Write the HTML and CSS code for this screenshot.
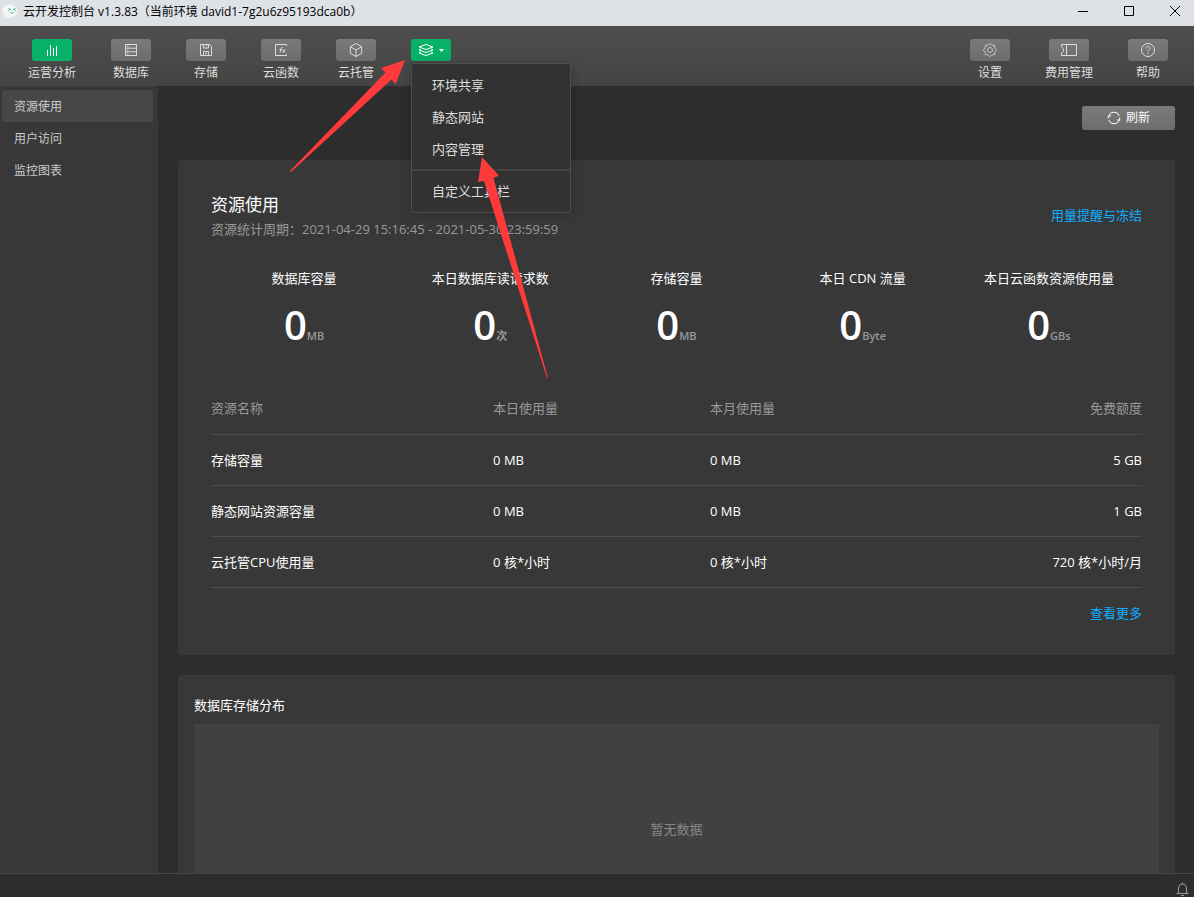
FILE: index.html
```html
<!DOCTYPE html>
<html lang="zh-CN">
<head>
<meta charset="utf-8">
<title>云开发控制台</title>
<link rel="stylesheet" href="styles.css">
</head>
<body>
<div class="app">
  <header class="titlebar">
    <svg class="app-logo" width="16" height="16" viewBox="0 0 16 16"><path d="M.500 7C.500 3 4 .500 8 .500S15.500 3 15.500 7 12 13.500 8 13.500L4.500 13 2.500 14V12Q.500 10 .500 7z" fill="#f4f6f7" stroke="#e8eaed"/><path d="M6.500 4.500 8.500 5.500 6.500 6.500M13.500 4.500 11.500 5.500 13.500 6.500M8.500 8.500q1.500 1.500 3 0" fill="none" stroke="#23b97c"/></svg>
    <h1 class="app-name">云开发控制台 v1.3.83（当前环境 david1-7g2u6z95193dca0b）</h1>
    <div class="window-controls">
      <button class="window-button" aria-label="最小化"><svg width="12" height="12"><path d="M1 5.500h10" stroke="#000"/></svg></button>
      <button class="window-button" aria-label="最大化"><svg width="12" height="12"><path d="M1.500.500h9v9h-9z" fill="none" stroke="#000"/></svg></button>
      <button class="window-button" aria-label="关闭"><svg width="12" height="12"><path d="M1 0l10 10M11 0 1 10" stroke="#000"/></svg></button>
    </div>
  </header>

  <div class="toolbar">
    <nav class="tools">
      <button class="tool"><span class="tool-icon active"><svg width="16" height="16" viewBox="0 0 16 16"><path d="M3.500 8v6M6.500 3v11M9.500 6v8M12.500 4v10" /></svg></span>运营分析</button>
      <button class="tool"><span class="tool-icon"><svg width="16" height="16" viewBox="0 0 16 16"><path d="M2.500 2.500h11v11h-11zM2.500 6.200h11M2.500 9.800h11M4 4.400h1.500M4 8h1.500M4 11.700h1.500"/></svg></span>数据库</button>
      <button class="tool"><span class="tool-icon"><svg width="16" height="16" viewBox="0 0 16 16"><path d="M2.500 2.500h9l2 2v9h-11zM5.500 2.500v3.500h5V2.500M8.500 3v1.500M5.500 13.500v-4h5v4M7 11.500h2"/></svg></span>存储</button>
      <button class="tool"><span class="tool-icon"><svg width="16" height="16" viewBox="0 0 16 16"><path d="M13.500 4V2.500h-11v11h11V12"/><path d="M9.700 5.500c-1.200-.5-1.500.3-1.700 1.200l-.8 3.800M6.500 7.500h2.700M9.500 7.500c1.200 0 1 3 2.500 3M12.500 7.500c-1.200 0-2 3-3.300 3"/></svg></span>云函数</button>
      <button class="tool"><span class="tool-icon"><svg width="16" height="16" viewBox="0 0 16 16"><path d="M8 1.500 13.700 4.700v6.600L8 14.500 2.300 11.300V4.700zM2.300 4.700 8 8l5.700-3.300M8 8v6.500"/></svg></span>云托管</button>
      <div class="more">
        <button class="tool-icon active" aria-label="更多" aria-expanded="true"><svg width="28" height="16" viewBox="0 0 28 16"><path d="M2 5 9 2.500l7 2.500-7 2.500zM4 7 2 8l7 2.500L16 8l-2-1M4 10l-2 1 7 2.500 7-2.500-2-1"/><path class="caret" d="M22 7h5l-2.500 3z"/></svg></button>
        <div class="menu">
          <button class="menu-item">环境共享</button>
          <button class="menu-item">静态网站</button>
          <button class="menu-item">内容管理</button>
          <hr class="menu-divider">
          <button class="menu-item">自定义工具栏</button>
        </div>
      </div>
    </nav>
    <nav class="tools">
      <button class="tool"><span class="tool-icon"><svg class="thin" width="16" height="16" viewBox="0 0 16 16"><path d="M8 1.300 9.900 3.200 12.700 3.300 12.800 6.100 14.700 8 12.800 9.900 12.700 12.700 9.900 12.800 8 14.700 6.100 12.800 3.300 12.700 3.200 9.900 1.300 8 3.200 6.100 3.300 3.300 6.100 3.200z"/><circle cx="8" cy="8" r="2.500"/></svg></span>设置</button>
      <button class="tool"><span class="tool-icon"><svg width="18" height="16" viewBox="0 0 18 16"><path d="M1.500 2.500h15v11h-15v-2.500c2.600-.6 2.600-5.400 0-6zM6.500 2.500v11"/></svg></span>费用管理</button>
      <button class="tool"><span class="tool-icon"><svg width="16" height="16" viewBox="0 0 16 16"><circle cx="8" cy="8" r="6.500"/><path d="M6 6.500c0-2.700 4-2.600 4-.2C10 7.800 8 7.700 8 9.500M8 10.800v1.200"/></svg></span>帮助</button>
    </nav>
  </div>

  <div class="workspace">
    <nav class="sidebar">
      <a class="side-link current" href="#usage">资源使用</a>
      <a class="side-link" href="#visits">用户访问</a>
      <a class="side-link" href="#charts">监控图表</a>
    </nav>
    <main class="content">
      <button class="refresh"><svg width="14" height="14" viewBox="0 0 14 14"><path d="M1.600 5A5.700 5.700 0 0 1 12.400 5M12.400 9A5.700 5.700 0 0 1 1.600 9M1.300 7.500V5H4M12.700 6.500V9H10"/></svg>刷新</button>

      <section class="card usage" id="usage">
        <div class="usage-head">
          <div>
            <h2 class="usage-title">资源使用</h2>
            <p class="period">资源统计周期：2021-04-29 15:16:45 - 2021-05-30 23:59:59</p>
          </div>
          <a class="link freeze" href="#freeze">用量提醒与冻结</a>
        </div>
        <div class="stats">
          <div class="stat"><div>数据库容量</div><div class="figure"><b class="value">0</b><span class="unit">MB</span></div></div>
          <div class="stat"><div>本日数据库读请求数</div><div class="figure"><b class="value">0</b><span class="unit">次</span></div></div>
          <div class="stat"><div>存储容量</div><div class="figure"><b class="value">0</b><span class="unit">MB</span></div></div>
          <div class="stat"><div>本日 CDN 流量</div><div class="figure"><b class="value">0</b><span class="unit">Byte</span></div></div>
          <div class="stat"><div>本日云函数资源使用量</div><div class="figure"><b class="value">0</b><span class="unit">GBs</span></div></div>
        </div>
        <table class="quota">
          <thead><tr><th class="col-name">资源名称</th><th class="col-day">本日使用量</th><th>本月使用量</th><th class="end">免费额度</th></tr></thead>
          <tbody>
            <tr><td>存储容量</td><td>0 MB</td><td>0 MB</td><td class="end">5 GB</td></tr>
            <tr><td>静态网站资源容量</td><td>0 MB</td><td>0 MB</td><td class="end">1 GB</td></tr>
            <tr><td>云托管CPU使用量</td><td>0 核*小时</td><td>0 核*小时</td><td class="end">720 核*小时/月</td></tr>
          </tbody>
        </table>
        <div class="more-row"><a class="link" href="#all">查看更多</a></div>
      </section>

      <section class="card storage">
        <h2 class="storage-title">数据库存储分布</h2>
        <div class="empty">暂无数据</div>
      </section>
    </main>
  </div>

  <footer class="statusbar">
    <button class="bell" aria-label="通知"><svg width="13" height="14" viewBox="0 0 13 14"><path d="M2.500 11.500V6a4 4 0 0 1 8 0v5.500M.5 11.500h12M6.500.500V2M5 13.500h3" /></svg></button>
  </footer>

  <svg class="arrows" width="560" height="390" viewBox="0 0 560 390" aria-hidden="true">
    <path d="M405 60 395.700 84 391.500 79.500 291 172 290 171 385.500 72.500 381 68z"/>
    <path d="M482 157 499 175.700 493.500 178 548 378 547 378 484 181 478 182z"/>
  </svg>
</div>
</body>
</html>
```
FILE: styles.css
```css
* { box-sizing: border-box; }

body {
  margin: 0;
  font: 13px/20px "Open Sans", "Noto Sans CJK SC", sans-serif;
  color: #fff;
  background: #2d2d2d;
}

button {
  margin: 0;
  padding: 0;
  border: 0;
  background: none;
  color: inherit;
  font: inherit;
}

h1, h2, p { margin: 0; font-weight: 400; }

svg { display: block; }

.app {
  position: relative;
  display: flex;
  flex-direction: column;
  height: 100vh;
  overflow: hidden;
}

.titlebar {
  display: flex;
  flex: none;
  gap: 5px;
  height: 26px;
  padding: 2px 0 4px 2px;
  align-items: center;
  background: #dee1e6;
  color: #000;
}

.app-name { font-size: 12px; line-height: 20px; }

.window-controls { display: flex; gap: 8px; margin-left: auto; }

.window-button {
  display: flex;
  justify-content: center;
  align-items: center;
  width: 38px;
  height: 20px;
}

.toolbar {
  display: flex;
  flex: none;
  justify-content: space-between;
  height: 60px;
  padding: 13px 26px 0 28px;
  background: linear-gradient(#4e4e4e, #444);
}

.tools { display: flex; gap: 35px; }

.tool {
  display: flex;
  flex-direction: column;
  align-items: center;
  align-self: flex-start;
  gap: 2px;
  min-width: 40px;
  color: #ddd;
  font-size: 12px;
  line-height: 20px;
}

.tool-icon {
  display: flex;
  justify-content: center;
  align-items: center;
  width: 40px;
  height: 22px;
  border-radius: 3px;
  background: linear-gradient(#7a7a7a, #6c6c6c);
}

.tool-icon.active { background: #07b168; }

.tool-icon svg {
  fill: none;
  stroke: #ddd;
}

.tool-icon.active svg { stroke: #fff; }
.tool-icon .thin { stroke: #c4c4c4; }
.tool-icon .caret { fill: #fff; stroke: none; }

.more { position: relative; }

.menu {
  position: absolute;
  z-index: 2;
  top: 24px;
  left: 0;
  display: flex;
  flex-direction: column;
  width: 160px;
  padding: 5px 0;
  border: 1px solid #4e4e4e;
  border-radius: 3px;
  background: #323232;
  box-shadow: 0 2px 12px rgba(0, 0, 0, .2);
}

.menu-item {
  height: 32px;
  padding: 0 20px;
  color: #ddd;
  text-align: left;
}

.menu-divider {
  width: 100%;
  height: 2px;
  margin: 4px 0;
  border: 0;
  background: #444;
}

.workspace { display: flex; flex: 1; min-height: 0; }

.sidebar {
  flex: none;
  width: 158px;
  padding: 4px 5px 0 2px;
  background: #383838;
}

.side-link {
  display: block;
  padding: 2px 12px 0;
  border-radius: 2px;
  color: #ccc;
  font-size: 12px;
  line-height: 30px;
  text-decoration: none;
}

.side-link.current { background: #474747; }

.content {
  display: flex;
  flex: 1;
  flex-direction: column;
  padding: 20px 19px 0 20px;
  overflow: hidden;
}

.refresh {
  display: flex;
  flex: none;
  justify-content: center;
  align-items: center;
  align-self: flex-end;
  gap: 5px;
  width: 93px;
  height: 24px;
  border-radius: 3px;
  background: linear-gradient(#7a7a7a, #6e6e6e);
  font-size: 12px;
}

.refresh svg { fill: none; stroke: #fff; }

.card {
  flex: none;
  border-radius: 3px;
  background: #383838;
}

.usage { margin-top: 30px; padding: 33px 33px 32px; }

.usage-head {
  display: flex;
  justify-content: space-between;
  align-items: flex-start;
}

.usage-title { font-size: 17px; line-height: 24px; }
.period { color: #999; line-height: 24px; }
.link { color: #10aeff; text-decoration: none; }
.freeze { line-height: 44px; }

.stats {
  display: grid;
  grid-template-columns: repeat(5, 1fr);
  margin-top: 27px;
  text-align: center;
}

.figure { padding-top: 12px; line-height: 50px; }
.value { font-size: 40px; font-weight: 600; }
.unit { color: #999; font-size: 11px; font-weight: 600; }

.quota {
  width: 100%;
  margin-top: 22px;
  border-collapse: collapse;
}

.quota th, .quota td {
  height: 51px;
  padding: 0;
  border-bottom: 1px solid #4c4c4c;
  font-weight: 400;
  text-align: left;
}

.quota th { color: #999; }
.quota .end { text-align: right; }
.quota .col-name { width: 30.3%; }
.quota .col-day { width: 23.3%; }

.more-row {
  padding-top: 15px;
  text-align: right;
}

.storage { margin-top: 20px; padding: 20px 16px; }
.storage-title { font-size: 13px; line-height: 20px; }

.empty {
  display: flex;
  justify-content: center;
  align-items: center;
  height: 210px;
  margin-top: 9px;
  background: #414141;
  color: #888;
}

.statusbar {
  display: flex;
  flex: none;
  justify-content: flex-end;
  align-items: flex-end;
  height: 24px;
  padding: 0 5px 1px 0;
  border-top: 1px solid #444;
  background: #2d2d2d;
}

.bell svg { fill: none; stroke: #999; }

.arrows {
  position: absolute;
  z-index: 3;
  top: 0;
  left: 0;
  fill: #ff3a3a;
  pointer-events: none;
}
```
